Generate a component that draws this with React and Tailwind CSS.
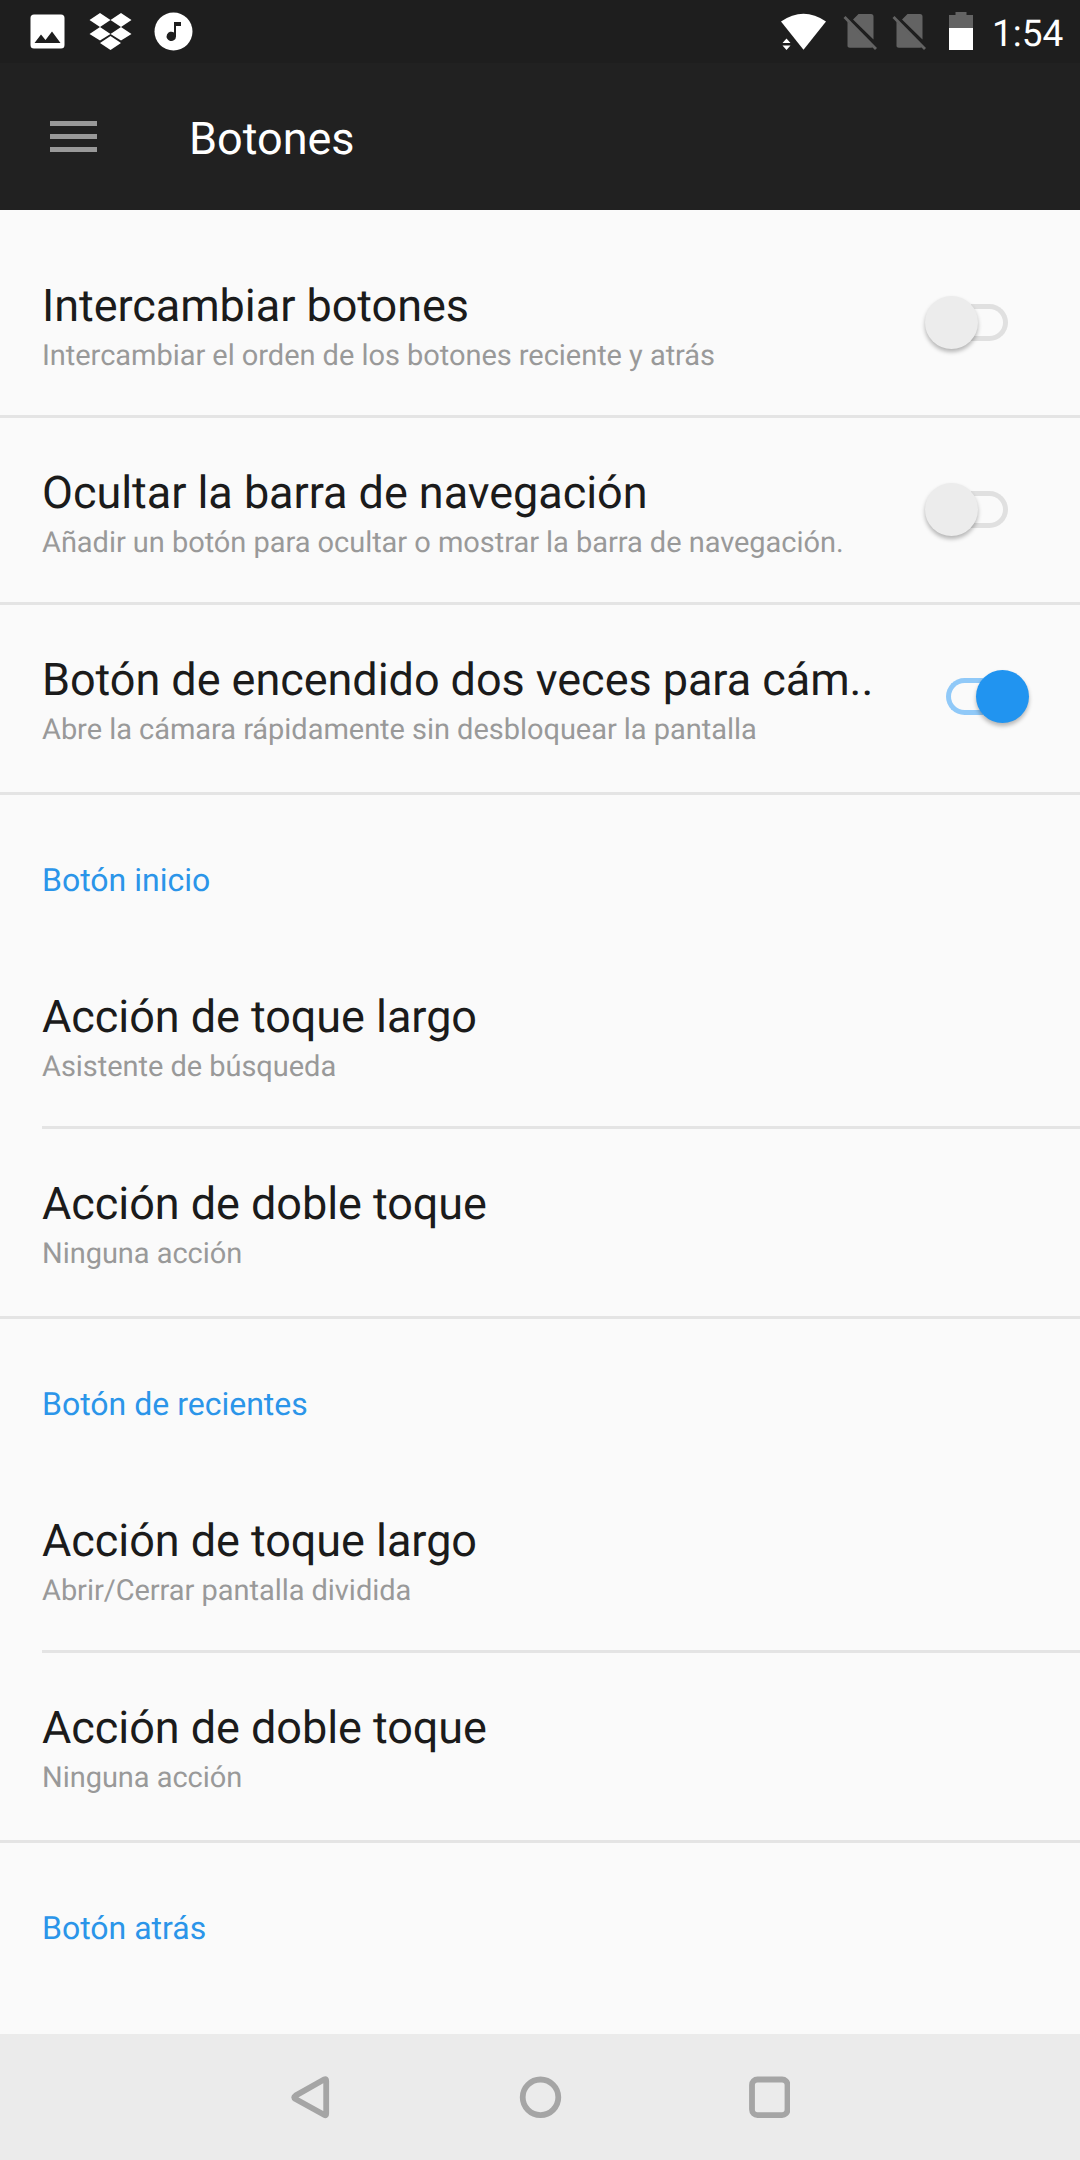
import React, { useState } from 'react'

const groups = [
  {
    id: 'general',
    rows: [
      { id: 'swap', title: 'Intercambiar botones', desc: 'Intercambiar el orden de los botones reciente y atrás', toggle: true },
      { id: 'hide', title: 'Ocultar la barra de navegación', desc: 'Añadir un botón para ocultar o mostrar la barra de navegación.', toggle: true },
      { id: 'camera', title: 'Botón de encendido dos veces para cám..', desc: 'Abre la cámara rápidamente sin desbloquear la pantalla', toggle: true },
    ],
  },
  {
    id: 'home',
    label: 'Botón inicio',
    rows: [
      { id: 'home-long', title: 'Acción de toque largo', desc: 'Asistente de búsqueda' },
      { id: 'home-double', title: 'Acción de doble toque', desc: 'Ninguna acción' },
    ],
  },
  {
    id: 'recents',
    label: 'Botón de recientes',
    rows: [
      { id: 'recents-long', title: 'Acción de toque largo', desc: 'Abrir/Cerrar pantalla dividida' },
      { id: 'recents-double', title: 'Acción de doble toque', desc: 'Ninguna acción' },
    ],
  },
  { id: 'back', label: 'Botón atrás', rows: [] },
]

function NoSimIcon() {
  return (
    <svg width="34" height="37" viewBox="0 0 34 37" fill="#636363">
      <path d="M15.500 1H28a2.500 2.500 0 0 1 2.500 2.500V26.500L10 6.500z" />
      <path d="M4.500 8.500L30 34a2.500 2.500 0 0 1-2 .8H7A2.500 2.500 0 0 1 4.500 32z" />
      <path d="M1.500 4l31.500 32" stroke="#636363" strokeWidth="2.800" />
    </svg>
  )
}

function StatusBar() {
  return (
    <div className="h-[63px] bg-[#1e1e1e] flex items-start justify-between">
      <div className="flex items-start pl-[30px] pt-3">
        <svg className="mt-0.5" width="35" height="35" viewBox="0 0 35 35">
          <path fillRule="evenodd" fill="#fff" d="M4 .5h27a3.500 3.500 0 0 1 3.500 3.500v27a3.500 3.500 0 0 1-3.500 3.500H4A3.500 3.500 0 0 1 .5 31V4A3.500 3.500 0 0 1 4 .5zM4.500 29h26L22 17.500l-6.500 8.500-4.500-5.500z" />
        </svg>
        <svg className="ml-6" width="43" height="38" viewBox="0 0 43 38" fill="#fff">
          <path d="M11 1l10.500 7L11 15 .5 8zM32 1l10.500 7L32 15 21.500 8zM11 15l10.500 7L11 28.500.5 22zM32 15l10.500 7L32 28.500 21.500 22zM21.500 24L32 31l-10.500 7L11 31z" />
        </svg>
        <svg className="ml-[22px]" width="39" height="39" viewBox="0 0 39 39">
          <circle cx="19.500" cy="19.500" r="19" fill="#fff" />
          <path d="M20 10h7v4h-5v10.500a4.700 4.700 0 1 1-2-4z" fill="#1e1e1e" />
        </svg>
      </div>

      <div className="flex items-start pt-3">
        <svg className="mt-px" width="46" height="38" viewBox="0 0 46 38" fill="#fff">
          <path d="M0 8.500Q22.500-7 45 8.500L22.500 36.800z" />
          <path d="M5.500 25.500l4 4.500h-8zM1.500 32.500h8L5.500 37z" />
        </svg>
        <div className="ml-4 mt-px"><NoSimIcon /></div>
        <div className="ml-[15px] mt-px"><NoSimIcon /></div>
        <svg className="ml-[23px]" width="24" height="38" viewBox="0 0 24 38">
          <path d="M6.500 0h11v3H24v13H0V3h6.500z" fill="#636363" />
          <path d="M0 16h24v22H0z" fill="#fff" />
        </svg>
        <span className="pl-[19px] w-[107px] text-white text-[37px] leading-[45px]">1:54</span>
      </div>
    </div>
  )
}

function Switch({ on, onChange }) {
  return (
    <button role="switch" aria-checked={on} onClick={onChange} className={`flex items-center pb-0.5 ${on ? 'mr-[51px]' : 'mr-[72px]'}`}>
      {on && <span className="w-[37px] h-[37px] -mr-[7px] rounded-l-full border-5 border-r-0 border-[#90c9f8]" />}
      <span className={`relative w-[53px] h-[53px] rounded-full shadow-[0_3px_4px_rgba(0,0,0,0.28)] ${on ? 'bg-[#2194f0]' : 'bg-[#ececec]'}`} />
      {!on && <span className="w-[37px] h-[37px] -ml-[7px] rounded-r-full border-5 border-l-0 border-[#e0e0e0]" />}
    </button>
  )
}

function SettingRow({ row, on, onToggle }) {
  return (
    <div className="h-[184px] flex items-center justify-between">
      <div className="pl-[42px] pt-[5px] whitespace-nowrap">
        <h2 className="text-[45px] leading-[54px] tracking-[-0.05px] text-[#1b1b1b]">{row.title}</h2>
        <p className="text-[29px] leading-[34px] mt-[6px] tracking-[-0.04px] text-[#999]">{row.desc}</p>
      </div>
      {row.toggle && <Switch on={on} onChange={onToggle} />}
    </div>
  )
}

function App() {
  const [enabled, setEnabled] = useState({ camera: true })
  const toggle = (id) => setEnabled(prev => ({ ...prev, [id]: !prev[id] }))

  return (
    <div className="w-[1080px] h-[2160px] bg-[#fafafa] flex flex-col overflow-hidden font-['Roboto',sans-serif] [text-rendering:geometricPrecision]">
      <StatusBar />

      {/* App bar */}
      <header className="h-[147px] bg-[#212121] flex items-center pl-[50px]">
        <button className="flex flex-col gap-2">
          <span className="w-[47px] h-[5px] bg-[#999]" />
          <span className="w-[47px] h-[5px] bg-[#999]" />
          <span className="w-[47px] h-[5px] bg-[#999]" />
        </button>
        <h1 className="ml-[92px] pt-[5px] text-[45px] leading-[54px] text-white">Botones</h1>
      </header>

      {/* Settings list */}
      <main className="flex-1 pt-[21px] overflow-hidden">
        {groups.map((group, g) => (
          <section key={group.id}>
            {group.label && (
              <h3 className="h-[147px] pl-[42px] pt-[65px] text-[32px] leading-[40px] text-[#2b95e9]">{group.label}</h3>
            )}
            {group.rows.map((row, i) => (
              <div key={row.id}>
                <SettingRow row={row} on={!!enabled[row.id]} onToggle={() => toggle(row.id)} />
                {i < group.rows.length - 1 && (
                  <div className={`h-[3px] bg-[#e4e4e4] ${group.label ? 'ml-[42px]' : ''}`} />
                )}
              </div>
            ))}
            {g < groups.length - 1 && <div className="mt-[3px] h-[3px] bg-[#e4e4e4]" />}
          </section>
        ))}
      </main>

      {/* Navigation bar */}
      <nav className="h-[126px] bg-[#ebebeb] flex items-center justify-center">
        <svg width="500" height="44" viewBox="0 0 500 44" fill="none" stroke="#a5a5a5" strokeWidth="5.800" strokeLinejoin="round">
          <path d="M34.500 4.300Q36.200 3.500 36.200 6V38.500Q36.200 41 34.500 40L5.500 24Q2.800 22.300 5.500 20.600z" />
          <circle cx="250.500" cy="22.300" r="17.800" />
          <rect x="462" y="4.500" width="35.500" height="35.600" rx="5.500" />
        </svg>
      </nav>
    </div>
  )
}

export default App
